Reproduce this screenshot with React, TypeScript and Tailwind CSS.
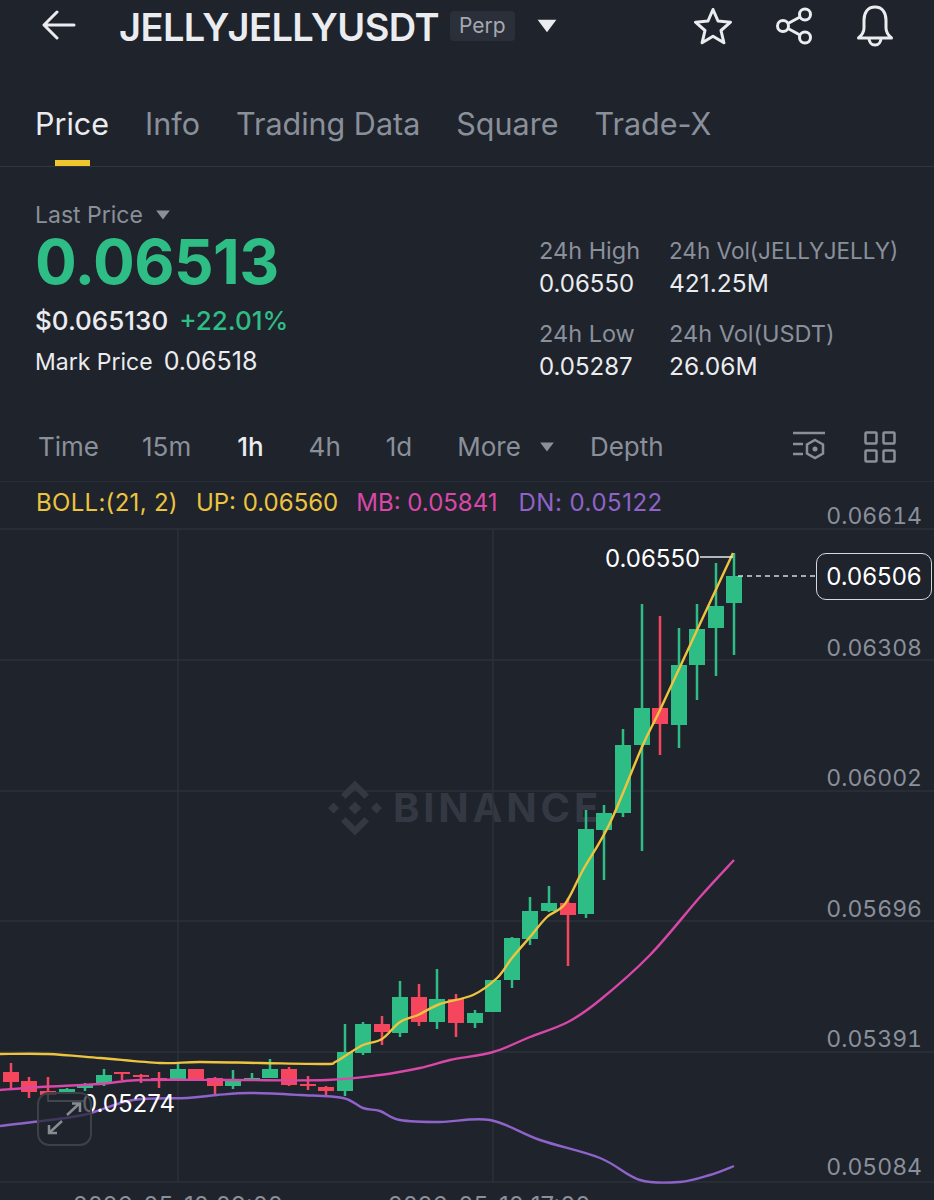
import React from "react";

type C = [number, number, number, number, number, "g" | "r"];
const candles: C[] = [
  [11, 1072, 1082, 1063, 1088, "r"],
  [29, 1081, 1092, 1077, 1098, "r"],
  [48, 1091, 1095, 1077, 1095, "r"],
  [67, 1089, 1092, 1088, 1094, "g"],
  [85, 1084, 1088, 1083, 1091, "g"],
  [104, 1075, 1084, 1069, 1086, "g"],
  [122, 1072, 1074, 1072, 1080, "r"],
  [141, 1075, 1077, 1074, 1083, "r"],
  [159, 1078, 1079, 1072, 1088, "r"],
  [178, 1069, 1079, 1063, 1079, "g"],
  [196, 1069, 1079, 1069, 1079, "r"],
  [215, 1078, 1086, 1077, 1095, "r"],
  [233, 1080, 1086, 1070, 1089, "g"],
  [252, 1078, 1079, 1073, 1080, "g"],
  [270, 1069, 1078, 1059, 1078, "g"],
  [289, 1069, 1085, 1067, 1086, "r"],
  [308, 1084, 1086, 1076, 1090, "r"],
  [326, 1087, 1091, 1086, 1095, "r"],
  [345, 1052, 1091, 1024, 1096, "g"],
  [363, 1024, 1053, 1022, 1055, "g"],
  [382, 1024, 1032, 1016, 1045, "r"],
  [400, 997, 1033, 981, 1037, "g"],
  [419, 997, 1022, 984, 1026, "r"],
  [437, 999, 1022, 969, 1029, "g"],
  [456, 999, 1023, 994, 1037, "r"],
  [475, 1013, 1023, 1010, 1028, "g"],
  [493, 980, 1012, 980, 1012, "g"],
  [512, 938, 980, 937, 988, "g"],
  [530, 911, 939, 897, 945, "g"],
  [549, 903, 911, 886, 912, "g"],
  [568, 903, 915, 898, 966, "r"],
  [586, 829, 914, 810, 918, "g"],
  [604, 813, 830, 805, 880, "g"],
  [623, 745, 813, 729, 817, "g"],
  [642, 708, 745, 604, 851, "g"],
  [660, 708, 724, 616, 755, "r"],
  [679, 665, 725, 628, 748, "g"],
  [697, 629, 665, 604, 700, "g"],
  [716, 606, 628, 563, 676, "g"],
  [734, 576, 603, 553, 655, "g"],
];

type P = [number, number];
const up: P[] = [[0,1054],[48,1054],[100,1058],[160,1063],[200,1062],[260,1063],[325,1064],[335,1062],[345,1056],[363,1045],[382,1039],[400,1022],[418,1015],[440,1004],[473,995],[497,978],[512,958],[530,937],[547,917],[565,904],[583,870],[610,823],[642,747],[660,710],[698,628],[733,553]];
const mb: P[] = [[0,1090],[40,1087],[100,1084],[140,1080],[233,1080],[327,1080],[380,1075],[420,1068],[450,1060],[493,1052],[530,1037],[568,1022],[600,1000],[650,955],[700,897],[734,860]];
const dn: P[] = [[0,1126],[33,1122],[83,1115],[133,1100],[187,1098],[217,1095],[250,1093],[300,1095],[343,1098],[363,1108],[380,1111],[400,1120],[440,1122],[490,1120],[540,1140],[600,1158],[640,1180],[680,1182],[710,1175],[734,1166]];

function smooth(p: P[]) {
  let d = `M${p[0][0]} ${p[0][1]}`;
  for (let i = 0; i < p.length - 1; i++) {
    const a = p[Math.max(i - 1, 0)];
    const b = p[i];
    const c = p[i + 1];
    const e = p[Math.min(i + 2, p.length - 1)];
    d += `C${b[0] + (c[0] - a[0]) / 6} ${b[1] + (c[1] - a[1]) / 6} ${c[0] - (e[0] - b[0]) / 6} ${c[1] - (e[1] - b[1]) / 6} ${c[0]} ${c[1]}`;
  }
  return d;
}

function Caret({ className }: { className: string }) {
  return (
    <svg viewBox="0 0 16 11" className={className} fill="currentColor">
      <path d="M0.5 0.5h15L8 10.5z" />
    </svg>
  );
}

function Chart() {
  return (
    <svg viewBox="0 482 934 718" className="absolute inset-0 w-[934px] h-[718px]" fill="none">
      {[529, 660, 791, 921, 1052, 1182].map((y) => (
        <line key={y} x1="0" x2="934" y1={y} y2={y} stroke="#2c3038" strokeWidth="1.5" />
      ))}
      {[178, 493].map((x) => (
        <line key={x} x1={x} x2={x} y1="529" y2="1182" stroke="#2c3038" strokeWidth="1.5" />
      ))}
      <g fill="#343843" transform="translate(355 808)">
        <path d="M0 -27.500L14 -13.500 9.500 -9 0 -18.500 -9.500 -9 -14 -13.500z" />
        <path d="M0 27.500L14 13.500 9.500 9 0 18.500 -9.500 9 -14 13.500z" />
        <path d="M-27 0l5.500-5.500 5.500 5.500-5.500 5.500z M27 0l-5.500-5.500-5.500 5.500 5.500 5.500z M0 -6.500l6.500 6.500-6.500 6.500-6.500-6.500z" />
      </g>
      {candles.map(([x, t, b, h, l, c]) => {
        const col = c === "g" ? "#2ebd85" : "#f6465d";
        return (
          <g key={x}>
            <line x1={x} x2={x} y1={h} y2={l} stroke={col} strokeWidth="2.5" />
            <rect x={x - 8} y={t} width="16" height={Math.max(b - t, 2)} fill={col} />
          </g>
        );
      })}
      <path d={smooth(dn)} stroke="#8f63c9" strokeWidth="2.4" />
      <path d={smooth(mb)} stroke="#d947a8" strokeWidth="2.4" />
      <path d={smooth(up)} stroke="#eec33e" strokeWidth="2.4" />
      <path d="M700 557H733" stroke="#e6e8ea" strokeWidth="1.3" />
      <path d="M48 1094V1101H84" stroke="#b8bcc2" strokeWidth="1.3" />
      <path d="M738 576H816" stroke="#d5d8dc" strokeWidth="1.3" strokeDasharray="5 4" />
    </svg>
  );
}

export default function App() {
  return (
    <div className="w-[934px] h-[1200px] overflow-hidden bg-[#1f232c] text-[#eaecef] font-['Inter','Liberation_Sans',sans-serif]">
      <header className="h-[54px] flex items-center pl-[42px] pr-[40px]">
        <svg viewBox="0 0 34 30" className="w-[34px] h-[30px] shrink-0 mb-[4px]" fill="none" stroke="#eaecef" strokeWidth="3" strokeLinecap="round" strokeLinejoin="round">
          <path d="M32 15H3M15 2L2 15l13 13" />
        </svg>
        <h1 className="ml-[43px] text-[38px] leading-[54px] font-semibold tracking-[-0.55px] whitespace-nowrap">JELLYJELLYUSDT</h1>
        <span className="ml-[11px] mb-[2px] h-[30px] px-[9px] rounded bg-[#2a2f39] text-[#a4a9b1] text-[21px] leading-[30px]">Perp</span>
        <Caret className="ml-[22px] mb-[2px] w-[20px] h-[14px] text-[#eaecef]" />
        <div className="ml-auto mb-[2px] flex items-center gap-[43px]">
          <svg viewBox="0 0 38 38" className="w-[38px] h-[38px]" fill="none" stroke="#eaecef" strokeWidth="3" strokeLinejoin="round">
            <path d="M19 2.500l5 11.500 12.500 1.200-9.500 8.300 2.900 12.300L19 29.300 8.100 35.800 11 23.500 1.500 15.200 14 14z" />
          </svg>
          <svg viewBox="0 0 38 38" className="w-[38px] h-[38px]" fill="none" stroke="#eaecef" strokeWidth="3">
            <circle cx="30" cy="7.500" r="5.500" />
            <circle cx="8" cy="19" r="5.500" />
            <circle cx="30" cy="30.500" r="5.500" />
            <path d="M13 16.500L25 10M13 21.500L25 28" />
          </svg>
          <svg viewBox="0 0 38 42" className="w-[38px] h-[42px]" fill="none" stroke="#eaecef" strokeWidth="3" strokeLinejoin="round">
            <path d="M19 2C11.500 2 8 8 8 15v8c0 4-2 7-5.500 10h33C32 30 30 27 30 23v-8C30 8 26.500 2 19 2z" />
            <path d="M13 33c0 4 2.500 7 6 7s6-3 6-7" />
          </svg>
        </div>
      </header>

      <nav className="mt-[46px] h-[67px] border-b border-[#31363e] flex items-start pl-[35px] gap-[36px] text-[30.5px] leading-[48px] text-[#8a909a]">
        <div className="flex flex-col items-center text-[#eaecef]">
          <span>Price</span>
          <div className="mt-[12px] w-[35px] h-[6px] bg-[#f0c62f]" />
        </div>
        <span>Info</span>
        <span>Trading Data</span>
        <span>Square</span>
        <span>Trade-X</span>
      </nav>

      <section className="h-[252px] flex">
        <div className="w-[539px] pl-[35px] pt-[34px]">
          <div className="flex items-center text-[23px] leading-[28px] text-[#8a909a]">
            Last Price
            <Caret className="ml-[12px] w-[16px] h-[10px]" />
          </div>
          <div className="text-[62px] leading-[66px] font-bold text-[#2ebd85] tracking-[-0.5px]">0.06513</div>
          <div className="mt-[10px] flex text-[26px] leading-[32px] font-medium">
            <span>$0.065130</span>
            <span className="ml-[11px] text-[#2ebd85]">+22.01%</span>
          </div>
          <div className="mt-[8px] flex items-baseline text-[23px] leading-[32px]">
            <span>Mark Price</span>
            <span className="ml-[11px] text-[25px]">0.06518</span>
          </div>
        </div>
        <div className="w-[130px] pt-[67px] text-[23.5px] leading-[33px]">
          <div className="text-[#8a909a]">24h High</div>
          <div className="text-[24px]">0.06550</div>
          <div className="mt-[17px] text-[#8a909a]">24h Low</div>
          <div className="text-[24px]">0.05287</div>
        </div>
        <div className="pt-[67px] text-[23px] leading-[33px]">
          <div className="text-[#8a909a] text-[22.500px]">24h Vol(JELLYJELLY)</div>
          <div className="text-[24.500px]">421.25M</div>
          <div className="mt-[17px] text-[#8a909a] text-[23.500px]">24h Vol(USDT)</div>
          <div className="text-[24.500px]">26.06M</div>
        </div>
      </section>

      <div className="h-[63px] pb-[7px] border-b border-[#2a2e37] flex items-center pl-[38px] pr-[38px] text-[26px] text-[#8a909a]">
        <span>Time</span>
        <span className="ml-[43px]">15m</span>
        <span className="ml-[46px] text-[#eaecef] font-medium">1h</span>
        <span className="ml-[45px]">4h</span>
        <span className="ml-[45px]">1d</span>
        <span className="ml-[45px]">More</span>
        <Caret className="ml-[18px] w-[16px] h-[10px]" />
        <span className="ml-[35px]">Depth</span>
        <svg viewBox="0 0 34 32" className="ml-auto w-[34px] h-[32px]" fill="none" stroke="#8a909a" strokeWidth="2.500">
          <path d="M1 2h32M1 13h10M1 23h10" />
          <path d="M23 9l8 4.500v9L23 27l-8-4.500v-9z" />
          <circle cx="23" cy="18" r="2.500" fill="#8a909a" stroke="none" />
        </svg>
        <svg viewBox="0 0 32 32" className="ml-[38px] w-[32px] h-[32px]" fill="none" stroke="#8a909a" strokeWidth="2.500">
          <rect x="1.500" y="1.500" width="11" height="11" rx="1" />
          <rect x="19.500" y="1.500" width="11" height="11" rx="1" />
          <rect x="1.500" y="19.500" width="11" height="11" rx="1" />
          <rect x="19.500" y="19.500" width="11" height="11" rx="1" />
        </svg>
      </div>

      <div className="relative h-[718px] overflow-hidden">
        <div className="absolute left-[393px] top-[304px] text-[40px] leading-[44px] font-bold tracking-[3.8px] text-[#343843]">BINANCE</div>
        <Chart />

        <div className="absolute left-[36px] top-[6px] flex text-[24px] leading-[30px] whitespace-nowrap">
          <span className="text-[#eec33e] tracking-[0.3px]">BOLL:(21, 2)</span>
          <span className="ml-[18px] text-[#eec33e]">UP: 0.06560</span>
          <span className="ml-[18px] text-[#d947a8]">MB: 0.05841</span>
          <span className="ml-[21px] text-[#8f63c9] tracking-[0.5px]">DN: 0.05122</span>
        </div>

        <span className="absolute right-[12px] top-[20px] text-[23px] leading-[28px] tabular-nums text-[#8a909a]">0.06614</span>
        <span className="absolute right-[12px] top-[152px] text-[23px] leading-[28px] tabular-nums text-[#8a909a]">0.06308</span>
        <span className="absolute right-[12px] top-[282px] text-[23px] leading-[28px] tabular-nums text-[#8a909a]">0.06002</span>
        <span className="absolute right-[12px] top-[413px] text-[23px] leading-[28px] tabular-nums text-[#8a909a]">0.05696</span>
        <span className="absolute right-[12px] top-[543px] text-[23px] leading-[28px] tabular-nums text-[#8a909a]">0.05391</span>
        <span className="absolute right-[12px] top-[671px] text-[23px] leading-[28px] tabular-nums text-[#8a909a]">0.05084</span>

        <div className="absolute left-[816px] top-[71px] w-[116px] h-[47px] rounded-[10px] border border-[#d5d8dc] bg-[#1f232c] flex items-center justify-center text-[24px] text-white">0.06506</div>

        <span className="absolute left-[605px] top-[63px] text-[24px] leading-[28px] text-white">0.06550</span>
        <span className="absolute left-[82px] top-[608px] text-[24px] leading-[28px] text-white">0.05274</span>

        <div className="absolute left-[37px] top-[610px] w-[55px] h-[54px] rounded-[12px] border-2 border-[#3c4049] bg-[#1f232c]/70 flex items-center justify-center">
          <svg viewBox="39 1094 51 50" className="w-[51px] h-[50px]" fill="none" stroke="#868b94" strokeWidth="2.500">
            <path d="M49 1133L62 1121M49 1125V1133H57" />
            <path d="M80 1103L67 1115M72 1103.500H80V1112" />
          </svg>
        </div>

        <span className="absolute left-[73px] top-[710px] text-[24px] leading-[28px] text-[#8a909a] whitespace-nowrap">2026-05-10 09:00</span>
        <span className="absolute left-[388px] top-[710px] text-[24px] leading-[28px] text-[#8a909a] whitespace-nowrap">2026-05-10 17:00</span>
      </div>
    </div>
  );
}
